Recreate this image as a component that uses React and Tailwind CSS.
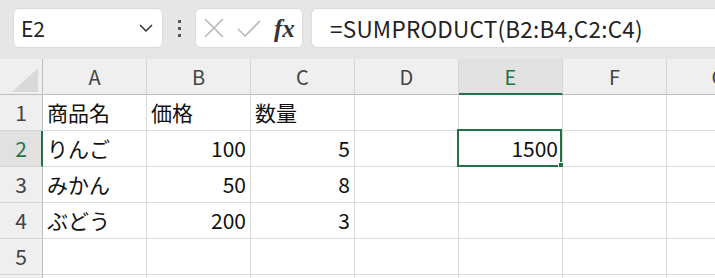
import React from "react";

const FONT = { fontFamily: '"Noto Sans CJK JP", "Noto Sans", sans-serif' };

const COLS = ["A", "B", "C", "D", "E", "F", "G"];

const DATA = [
  ["商品名", "価格", "数量", "", "", "", ""],
  ["りんご", 100, 5, "", 1500, "", ""],
  ["みかん", 50, 8, "", "", "", ""],
  ["ぶどう", 200, 3, "", "", "", ""],
  ["", "", "", "", "", "", ""],
  ["", "", "", "", "", "", ""],
];

function Toolbar() {
  return (
    <div className="flex h-[59px] items-start bg-[#e6e6e6] pt-[8px]">
      {/* Name box */}
      <div className="ml-[13px] flex h-[40px] w-[150px] items-center justify-between rounded-[6px] border border-[#dcdcdc] bg-white pl-[7px] pr-[7px]">
        <span className="text-[21px] leading-none text-[#222]">E2</span>
        <svg width="16" height="10" viewBox="0 0 16 10" className="mr-[1px]">
          <path d="M2 2 L8 8 L14 2" fill="none" stroke="#333" strokeWidth="1.5" />
        </svg>
      </div>
      {/* dots */}
      <div className="flex h-[40px] w-[32px] flex-col items-center justify-center gap-[4px]">
        <span className="block h-[3px] w-[3px] bg-[#555]" />
        <span className="block h-[3px] w-[3px] bg-[#555]" />
        <span className="block h-[3px] w-[3px] bg-[#555]" />
      </div>
      {/* fx box */}
      <div className="flex h-[40px] w-[108px] items-center rounded-[6px] border border-[#dcdcdc] bg-white">
        <svg width="20" height="20" viewBox="0 0 20 20" className="ml-[8px]">
          <path d="M1 1 L19 19 M19 1 L1 19" stroke="#b8b8b8" strokeWidth="1.6" fill="none" />
        </svg>
        <svg width="24" height="18" viewBox="0 0 24 18" className="ml-[13px]">
          <path d="M1 10 L8 17 L23 2" stroke="#b8b8b8" strokeWidth="1.6" fill="none" />
        </svg>
        <span
          className="ml-[13px] text-[25px] font-bold italic leading-none text-[#333]"
          style={{ fontFamily: '"Liberation Serif", "DejaVu Serif", serif' }}
        >
          fx
        </span>
      </div>
      {/* formula bar */}
      <div className="ml-[8px] flex h-[40px] flex-1 items-center rounded-l-[6px] border border-r-0 border-[#dcdcdc] bg-white pl-[18px]">
        <span className="whitespace-nowrap text-[22.5px] leading-none tracking-[0.25px] text-[#222]">
          =SUMPRODUCT(B2:B4,C2:C4)
        </span>
      </div>
    </div>
  );
}

function HeaderRow() {
  return (
    <div className="flex h-[36px]">
      <div className="relative h-[36px] w-[43px] shrink-0 border-b border-r border-b-[#bdbdbd] border-r-[#bdbdbd] bg-[#efefef]">
        <svg width="26" height="24" viewBox="0 0 26 24" className="absolute left-[12px] top-[9px]">
          <polygon points="26,0 26,24 0,24" fill="#d9d9d9" />
        </svg>
      </div>
      {COLS.map((c) =>
        c === "E" ? (
          <div
            key={c}
            className="flex h-[36px] w-[104px] shrink-0 items-center justify-center border-b-2 border-r border-b-[#217346] border-r-[#d4d4d4] bg-[#e1e1e1] pt-[2px] text-[20px] text-[#217346]"
          >
            {c}
          </div>
        ) : (
          <div
            key={c}
            className="flex h-[36px] w-[104px] shrink-0 items-center justify-center border-b border-r border-b-[#bdbdbd] border-r-[#d4d4d4] bg-[#efefef] text-[20px] text-[#444]"
          >
            {c}
          </div>
        )
      )}
    </div>
  );
}

function Row({ index, cells, showIndex }) {
  const selectedRow = index === 2;
  return (
    <div className="flex h-[36px]">
      {selectedRow ? (
        <div className="flex h-[36px] w-[43px] shrink-0 items-center justify-center border-b border-r-2 border-b-[#d4d4d4] border-r-[#217346] bg-[#e1e1e1] pl-[1px] text-[21px] text-[#217346]">
          {index}
        </div>
      ) : (
        <div className="flex h-[36px] w-[43px] shrink-0 items-center justify-center border-b border-r border-b-[#d4d4d4] border-r-[#bdbdbd] bg-[#efefef] text-[21px] text-[#444]">
          {showIndex ? index : ""}
        </div>
      )}
      {cells.map((v, i) => {
        const isNum = typeof v === "number";
        const selected = selectedRow && i === 4;
        return (
          <div
            key={i}
            className={
              isNum
                ? "relative flex h-[36px] w-[104px] shrink-0 items-center justify-end whitespace-nowrap border-b border-r border-[#dadada] bg-white pr-[4px] text-[21px] text-[#111]"
                : "relative flex h-[36px] w-[104px] shrink-0 items-center justify-start whitespace-nowrap border-b border-r border-[#dadada] bg-white pl-[4px] text-[21px] text-[#111]"
            }
          >
            {v}
            {selected && (
              <>
                <div className="pointer-events-none absolute left-[-2px] top-[-2px] h-[38px] w-[105px] border-2 border-[#217346]" />
                <div className="pointer-events-none absolute left-[99px] top-[31px] h-[8px] w-[8px] border border-white bg-[#217346]" />
              </>
            )}
          </div>
        );
      })}
    </div>
  );
}

export default function App() {
  return (
    <div className="h-[278px] w-[715px] overflow-hidden bg-white" style={FONT}>
      <Toolbar />
      <HeaderRow />
      {DATA.map((cells, r) => (
        <Row key={r} index={r + 1} cells={cells} showIndex={r < 5} />
      ))}
    </div>
  );
}
